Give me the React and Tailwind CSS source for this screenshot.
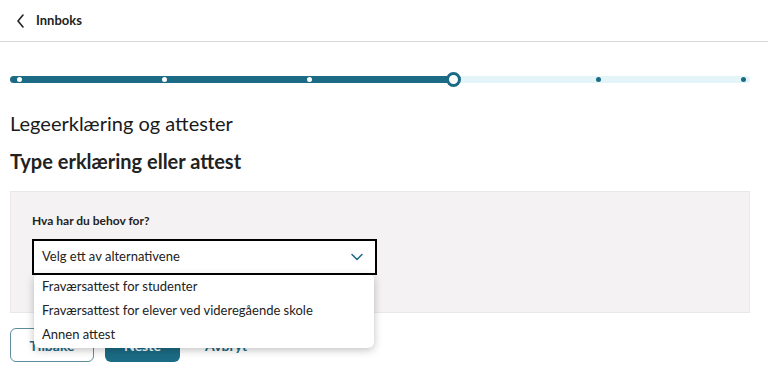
import React from 'react';

const steps = [0, 1, 2, 3, 4, 5];
const current = 3;

function Progress() {
  return (
    <div className="flex items-center h-[14px]">
      <div className="w-[7px] h-[7px] rounded-l-full bg-[#1b6b84]" />
      {steps.map((s, i) => (
        <React.Fragment key={s}>
          {s === current ? (
            <div className="w-[15px] h-[15px] -mx-[5px] z-10 rounded-full border-[3px] border-[#1b6b84] bg-white shrink-0" />
          ) : (
            <div className={`h-[7px] w-[5px] flex items-center justify-center shrink-0 ${s < current ? 'bg-[#1b6b84]' : 'bg-[#e3f5f8]'}`}>
              <div className={`w-[5px] h-[5px] rounded-full ${s < current ? 'bg-white' : 'bg-[#1b6b84]'}`} />
            </div>
          )}
          {i < steps.length - 1 && (
            <div className={`flex-1 h-[7px] ${s < current ? 'bg-[#1b6b84]' : 'bg-[#e3f5f8]'}`} />
          )}
        </React.Fragment>
      ))}
      <div className="w-[4px] h-[7px] rounded-r-full bg-[#e3f5f8]" />
    </div>
  );
}

export default function App() {
  const options = [
    'Fraværsattest for studenter',
    'Fraværsattest for elever ved videregående skole',
    'Annen attest',
  ];

  return (
    <div className="w-[768px] h-[374px] overflow-hidden bg-white text-[#222] font-['Lato','Noto_Sans',sans-serif]">
      {/* Header */}
      <div className="h-[42px] border-b border-[#d6d6d6] flex items-center pl-[15px] gap-[9px]">
        <svg width="12" height="16" viewBox="0 0 12 16" fill="none">
          <path d="M8 2L3 8l5 6" stroke="#222" strokeWidth="1.6" strokeLinecap="round" strokeLinejoin="round" />
        </svg>
        <span className="text-[13px] font-bold">Innboks</span>
      </div>

      <div className="px-[10px] pt-[30px]">
        <div className="pr-[8px]">
          <Progress />
        </div>

        <h1 className="mt-[24px] text-[20px] leading-[26px] font-normal text-[#1a1a1a]">Legeerklæring og attester</h1>
        <h2 className="mt-[12px] text-[20px] leading-[26px] font-bold">Type erklæring eller attest</h2>

        {/* Question panel */}
        <div className="mt-[17px] w-[740px] h-[122px] bg-[#f4f2f2] border border-[#e9e7e7] pt-[21px] pl-[21px]">
          <label className="block text-[12px] font-bold leading-[16px]">Hva har du behov for?</label>
          <div className="relative mt-[10px] w-[345px]">
            <div className="h-[36px] bg-white border-2 border-black flex items-center justify-between pl-[8px] pr-[12px]">
              <span className="text-[13px]">Velg ett av alternativene</span>
              <svg width="12" height="8" viewBox="0 0 12 8" fill="none">
                <path d="M1 1.5l5 5 5-5" stroke="#1b6b84" strokeWidth="1.5" strokeLinecap="round" strokeLinejoin="round" />
              </svg>
            </div>
            <ul className="absolute z-20 left-[2px] top-[36px] w-[340px] bg-white rounded-b-md rounded-t-sm shadow-[0_2px_8px_rgba(0,0,0,0.25)] pb-[1px]">
              {options.map((o) => (
                <li key={o} className="h-[24px] flex items-center pl-[8px] text-[13px]">{o}</li>
              ))}
            </ul>
          </div>
        </div>

        {/* Buttons */}
        <div className="mt-[15px] flex items-center gap-[11px]">
          <button className="w-[84px] h-[34px] rounded-md border border-[#5f8d9c] text-[#1b6b84] text-[14px] font-bold">Tilbake</button>
          <button className="w-[75px] h-[34px] rounded-md bg-[#1b6b84] text-white text-[14px] font-bold">Neste</button>
          <button className="px-[14px] h-[34px] text-[#1b6b84] text-[14px] font-bold">Avbryt</button>
        </div>
      </div>
    </div>
  );
}
